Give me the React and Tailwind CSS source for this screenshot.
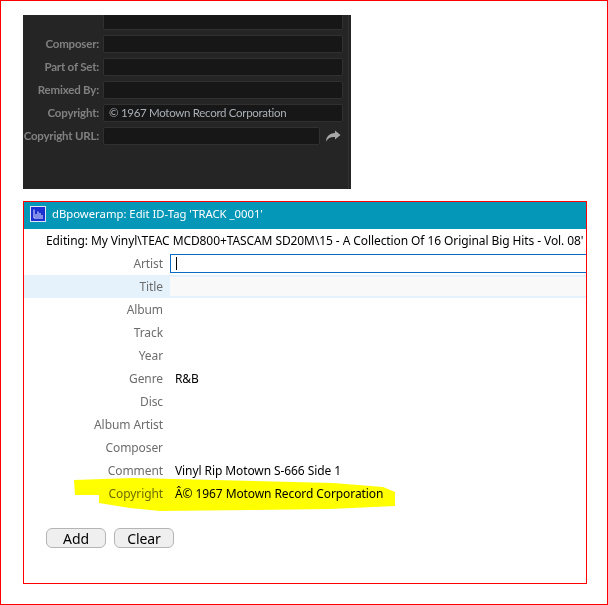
import React from 'react';

const darkRows = [
  { label: 'Composer:', value: '' },
  { label: 'Part of Set:', value: '' },
  { label: 'Remixed By:', value: '' },
  { label: 'Copyright:', value: '© 1967 Motown Record Corporation' },
];

const tagRows = [
  { label: 'Album', value: '' },
  { label: 'Track', value: '' },
  { label: 'Year', value: '' },
  { label: 'Genre', value: 'R&B' },
  { label: 'Disc', value: '' },
  { label: 'Album Artist', value: '' },
  { label: 'Composer', value: '' },
  { label: 'Comment', value: 'Vinyl Rip Motown S-666 Side 1' },
  { label: 'Copyright', value: 'Â© 1967 Motown Record Corporation' },
];

function DarkRow({ label, value }) {
  return (
    <div className="flex items-center h-[18px] mb-[5px]">
      <div className="w-[80px] shrink-0 pr-[4px] text-right text-[11.5px] tracking-[-0.2px] font-bold text-[#808080] whitespace-nowrap">{label}</div>
      <div className="w-[240px] shrink-0 h-[18px] rounded-[2px] border border-[#303030] bg-[#171717] pl-[5px] text-[11.5px] tracking-[-0.3px] leading-[16px] text-[#aab0b6] whitespace-nowrap">
        {value}
      </div>
    </div>
  );
}

function TagRow({ label, value }) {
  return (
    <div className="flex items-center h-[23px]">
      <div className="w-[139px] shrink-0 text-right text-[#6d6d6d] whitespace-nowrap">{label}</div>
      <div className="ml-[12px] text-black whitespace-nowrap">{value}</div>
    </div>
  );
}

function AppIcon() {
  return (
    <svg width="16" height="16" viewBox="0 0 16 16" className="shrink-0">
      <rect x="0.5" y="0.5" width="15" height="15" fill="#1c2fd0" stroke="#dfe6f7" />
      <path d="M4 3.5v8.5h9M6 11V8M8 11V5.5M10 11V7M12 11V9" stroke="#e8ecff" strokeWidth="1" fill="none" />
    </svg>
  );
}

function PillButton({ children }) {
  return (
    <button className="w-[60px] h-[20px] pt-px rounded-[6px] border border-[#b4b4b4] bg-[#efefef] text-[14px] leading-[18px] text-black">
      {children}
    </button>
  );
}

export default function App() {
  return (
    <div className="w-[608px] h-[605px] border border-[#ff0000] bg-white pl-[22px] pt-[14px] font-['Lato','Liberation_Sans',sans-serif] overflow-hidden">
      {/* top dark panel */}
      <div className="w-[328px] h-[174px] bg-[#252525] overflow-hidden">
        <div className="w-[326px] h-full border-r border-[#303030]">
          <div className="h-[15px] ml-[80px] w-[240px] rounded-b-[2px] border border-t-0 border-[#303030] bg-[#171717] mb-[5px]" />
          {darkRows.map(r => (
            <DarkRow key={r.label} label={r.label} value={r.value} />
          ))}
          <div className="flex items-center h-[18px]">
            <div className="w-[80px] shrink-0 pr-[4px] text-right text-[11.5px] tracking-[-0.2px] font-bold text-[#808080] whitespace-nowrap">Copyright URL:</div>
            <div className="w-[217px] shrink-0 h-[18px] rounded-[2px] border border-[#303030] bg-[#171717]" />
            <svg width="16" height="12" viewBox="0 0 16 12" className="ml-[5px] shrink-0">
              <path d="M10 0.5 L15.5 5 L10 9.5 V7 C6 6.6 3 8 1 11.5 C1.2 6.5 4.5 3.2 10 3 Z" fill="#a8a8a8" />
            </svg>
          </div>
        </div>
      </div>

      {/* dBpoweramp window */}
      <div className="relative mt-[12px] w-[564px] h-[383px] border border-[#ff0000] overflow-hidden font-['Noto_Sans','Liberation_Sans',sans-serif] text-[12px] tracking-[-0.09px]">
        <div className="flex items-center gap-[6px] h-[27px] pl-[6px] pb-[3px] bg-[#0497b8] text-white text-[11.3px] tracking-normal">
          <AppIcon />
          <span>dBpoweramp: Edit ID-Tag 'TRACK _0001'</span>
        </div>

        <div className="h-[23px] pl-[22px] pt-[1px] flex items-center text-black whitespace-nowrap">
          Editing: My Vinyl\TEAC MCD800+TASCAM SD20M\15 - A Collection Of 16 Original Big Hits - Vol. 08'
        </div>

        <div className="flex items-center h-[23px]">
          <div className="w-[139px] shrink-0 text-right text-[#6d6d6d]">Artist</div>
          <div className="ml-[7px] w-[430px] h-[19px] border border-[#0a6bc2] pl-[5px] flex items-center shrink-0">
            <div className="w-px h-[13px] bg-black" />
          </div>
        </div>

        <div className="flex items-center h-[23px] bg-[#e5f1fb]">
          <div className="w-[139px] shrink-0 text-right text-[#6d6d6d]">Title</div>
          <div className="ml-[7px] flex-1 h-[19px] bg-[#f9f9f9]" />
        </div>

        {tagRows.map(r => (
          <TagRow key={r.label} label={r.label} value={r.value} />
        ))}

        <div className="flex gap-[8px] pl-[22px] mt-[23px]">
          <PillButton>Add</PillButton>
          <PillButton>Clear</PillButton>
        </div>

        {/* marker scribble laid over the Copyright row */}
        <svg width="340" height="36" viewBox="0 0 340 36" className="absolute left-[50px] top-[276px] mix-blend-multiply">
          <path d="M0 2 L59 0 L259 5 L309 9 L321 14 L321 28 L256 31 L176 32 L86 33 L56 30 L25 25 L25 17 L1 17 Z" fill="#ffff00" />
        </svg>
      </div>
    </div>
  );
}
